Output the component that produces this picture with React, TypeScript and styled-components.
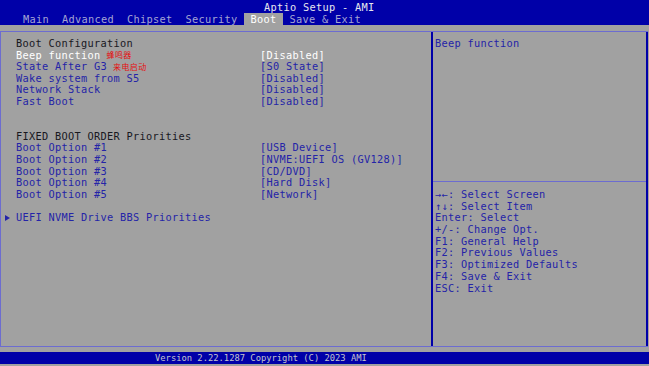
import React from "react";
import styled, { createGlobalStyle } from "styled-components";

const BLUE = "#0000a8";
const GRAY = "#a1a1a1";
const LAVENDER = "#6c6cd0";
const TEXT_BLUE = "#2424a8";
const DARK = "#18181f";

const GlobalStyle = createGlobalStyle`
  html, body { margin: 0; padding: 0; background: ${GRAY}; }
  body { font-family: "DejaVu Sans Mono", "Liberation Mono", monospace; }
`;

const Screen = styled.div`
  width: 649px;
  height: 366px;
  display: flex;
  flex-direction: column;
  background: ${GRAY};
  font-size: 10.3px;
  letter-spacing: 0.3px;
  overflow: hidden;
`;

const Header = styled.div`
  background: ${BLUE};
  height: 25px;
  display: flex;
  flex-direction: column;
`;

const Title = styled.div`
  height: 13px;
  box-sizing: border-box;
  padding: 2px 0 0 264px;
  line-height: 11px;
  color: #e6e6ee;
  white-space: pre;
`;

const Tabs = styled.div`
  display: flex;
  height: 12px;
  padding-left: 16.5px;
`;

const Tab = styled.span<{ $active?: boolean }>`
  padding: 0 6.5px;
  line-height: 12.5px;
  white-space: pre;
  color: ${(p) => (p.$active ? "#ffffff" : "#a4a4d4")};
  background: ${(p) => (p.$active ? GRAY : "transparent")};
`;

const Frame = styled.div`
  margin-top: 6px;
  width: 648px;
  height: 316px;
  box-sizing: border-box;
  border-top: 1px solid ${LAVENDER};
  border-bottom: 1px solid ${LAVENDER};
  display: flex;
`;

const LeftPane = styled.div`
  width: 431px;
  box-sizing: border-box;
  border-left: 1px solid ${LAVENDER};
  padding: 6px 0 0 15px;
`;

const RightPane = styled.div`
  flex: 1;
  display: flex;
  flex-direction: column;
  border-left: 2px solid ${BLUE};
  border-right: 2px solid ${BLUE};
`;

const HelpTop = styled.div`
  height: 150px;
  box-sizing: border-box;
  padding: 6px 0 0 2px;
  line-height: 11.6px;
  color: ${TEXT_BLUE};
  border-bottom: 1px solid ${LAVENDER};
`;

const HelpKeys = styled.div`
  padding: 7px 0 0 2px;
  display: flex;
  flex-direction: column;
`;

const HelpLine = styled.div`
  line-height: 11.7px;
  height: 11.7px;
  color: ${TEXT_BLUE};
  white-space: pre;
`;

const Row = styled.div`
  display: grid;
  grid-template-columns: 244px 1fr;
  height: 11.6px;
  line-height: 11.6px;
  white-space: pre;
`;

const Label = styled.span<{ $kind: "header" | "item" | "selected" }>`
  color: ${(p) =>
    p.$kind === "header" ? DARK : p.$kind === "selected" ? "#ffffff" : TEXT_BLUE};
  display: flex;
  align-items: center;
  height: 11.6px;
`;

const Value = styled.span<{ $selected?: boolean }>`
  color: ${(p) => (p.$selected ? "#ffffff" : TEXT_BLUE)};
`;

const Note = styled.span`
  font-family: "Noto Sans CJK SC", sans-serif;
  font-size: 8px;
  line-height: 10px;
  letter-spacing: 0.4px;
  color: #e41010;
  margin-left: 6px;
`;

const Arrow = styled.span`
  width: 13px;
  margin-left: -13px;
  display: inline-flex;
  align-items: center;
  padding-left: 2px;
  box-sizing: border-box;
`;

const Footer = styled.div`
  margin-top: 5px;
  height: 12px;
  background: ${BLUE};
  color: #c4c4cc;
  font-size: 8.8px;
  letter-spacing: 0;
  line-height: 12px;
  padding-left: 155px;
  white-space: pre;
`;

type Item =
  | { kind: "header"; label: string }
  | { kind: "blank" }
  | { kind: "item"; label: string; value: string; note?: string; selected?: boolean }
  | { kind: "submenu"; label: string };

const items: Item[] = [
  { kind: "header", label: "Boot Configuration" },
  { kind: "item", label: "Beep function", note: "蜂鸣器", value: "[Disabled]", selected: true },
  { kind: "item", label: "State After G3", note: "来电启动", value: "[S0 State]" },
  { kind: "item", label: "Wake system from S5", value: "[Disabled]" },
  { kind: "item", label: "Network Stack", value: "[Disabled]" },
  { kind: "item", label: "Fast Boot", value: "[Disabled]" },
  { kind: "blank" },
  { kind: "blank" },
  { kind: "header", label: "FIXED BOOT ORDER Priorities" },
  { kind: "item", label: "Boot Option #1", value: "[USB Device]" },
  { kind: "item", label: "Boot Option #2", value: "[NVME:UEFI OS (GV128)]" },
  { kind: "item", label: "Boot Option #3", value: "[CD/DVD]" },
  { kind: "item", label: "Boot Option #4", value: "[Hard Disk]" },
  { kind: "item", label: "Boot Option #5", value: "[Network]" },
  { kind: "blank" },
  { kind: "submenu", label: "UEFI NVME Drive BBS Priorities" },
];

const help = [
  "\u2192\u2190: Select Screen",
  "\u2191\u2193: Select Item",
  "Enter: Select",
  "+/-: Change Opt.",
  "F1: General Help",
  "F2: Previous Values",
  "F3: Optimized Defaults",
  "F4: Save & Exit",
  "ESC: Exit",
];

const tabs = ["Main", "Advanced", "Chipset", "Security", "Boot", "Save & Exit"];

const Triangle = () => (
  <svg width="5" height="6" viewBox="0 0 5 6">
    <path d="M0 0 L5 3 L0 6 Z" fill={TEXT_BLUE} />
  </svg>
);

export default function App() {
  return (
    <>
      <GlobalStyle />
      <Screen>
        <Header>
          <Title>Aptio Setup - AMI</Title>
          <Tabs>
            {tabs.map((t) => (
              <Tab key={t} $active={t === "Boot"}>
                {t}
              </Tab>
            ))}
          </Tabs>
        </Header>
        <Frame>
          <LeftPane>
            {items.map((it, i) => {
              if (it.kind === "blank") return <Row key={i} />;
              if (it.kind === "header")
                return (
                  <Row key={i}>
                    <Label $kind="header">{it.label}</Label>
                  </Row>
                );
              if (it.kind === "submenu")
                return (
                  <Row key={i}>
                    <Label $kind="item">
                      <Arrow>
                        <Triangle />
                      </Arrow>
                      {it.label}
                    </Label>
                  </Row>
                );
              return (
                <Row key={i}>
                  <Label $kind={it.selected ? "selected" : "item"}>
                    {it.label}
                    {it.note && <Note>{it.note}</Note>}
                  </Label>
                  <Value $selected={it.selected}>{it.value}</Value>
                </Row>
              );
            })}
          </LeftPane>
          <RightPane>
            <HelpTop>Beep function</HelpTop>
            <HelpKeys>
              {help.map((h) => (
                <HelpLine key={h}>{h}</HelpLine>
              ))}
            </HelpKeys>
          </RightPane>
        </Frame>
        <Footer>Version 2.22.1287 Copyright (C) 2023 AMI</Footer>
      </Screen>
    </>
  );
}
